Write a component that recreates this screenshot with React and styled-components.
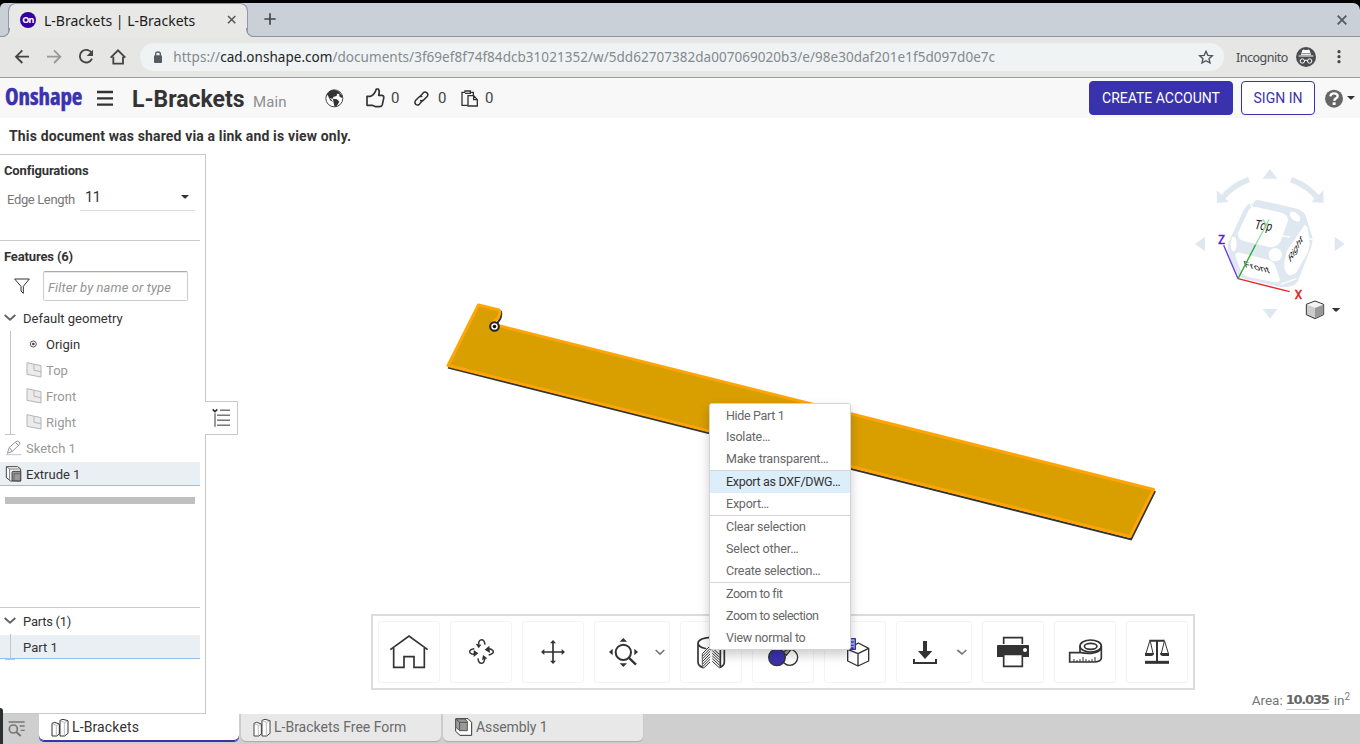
import React from "react";
import styled, { createGlobalStyle, css } from "styled-components";

const Global = createGlobalStyle`
  * { box-sizing: border-box; }
  html, body { margin: 0; padding: 0; }
  body { width: 1360px; height: 744px; overflow: hidden; background: #fff; }
  #root { height: 744px; }
`;

const ink = "#333";
const indigo = "#3a32ad";

const Window = styled.div`
  position: relative;
  display: flex;
  flex-direction: column;
  width: 1360px;
  height: 744px;
  overflow: hidden;
  background: #fff;
  color: ${ink};
  font-family: Roboto, "Liberation Sans", sans-serif;
  font-size: 13px;
  white-space: nowrap;
`;

const Svg = styled.svg`
  display: block;
  flex: none;
  overflow: visible;
`;

/* Icons are drawn on a grid of three units to the pixel. */
function Icon({ box, children, ...rest }) {
  const [, , w, h] = box.split(" ").map(Number);
  return (
    <Svg viewBox={box} width={w / 3} height={h / 3} fill="none" {...rest}>
      {children}
    </Svg>
  );
}

/* ---------- browser chrome ---------- */

const Backdrop = styled.div`
  flex: none;
  padding-top: 3px;
  background: #000;
  font-family: "Noto Sans", sans-serif;
`;

const TabStrip = styled.div`
  height: 34px;
  padding: 0 12px 0 8px;
  display: flex;
  align-items: flex-start;
  background: #c9d0d8;
  border-bottom: 1px solid #8f959e;
  border-radius: 5px 7px 0 0;
`;

const BrowserTab = styled.div`
  position: relative;
  width: 240px;
  height: 34px;
  padding: 0 11px 1px 11px;
  display: flex;
  align-items: center;
  background: #e8e8e6;
  border: 1px solid #9198a1;
  border-bottom: 0;
  border-radius: 8px 8px 0 0;
  font-size: 14px;
  color: #1c1c1c;
  &::before, &::after {
    content: "";
    position: absolute;
    bottom: 0;
    width: 8px;
    height: 8px;
    border-bottom: 1px solid #9198a1;
  }
  &::before { left: -8px; border-right: 1px solid #9198a1; border-bottom-right-radius: 8px; box-shadow: 3px 3px 0 1px #e8e8e6; clip-path: inset(0 -1px 0 0); }
  &::after { right: -8px; border-left: 1px solid #9198a1; border-bottom-left-radius: 8px; box-shadow: -3px 3px 0 1px #e8e8e6; clip-path: inset(0 0 0 -1px); }
`;

const Favicon = styled.span`
  width: 16px;
  height: 16px;
  margin-right: 8px;
  border-radius: 50%;
  background: #3500a0;
  color: #fff;
  font: bold 9px/16px "Noto Sans", sans-serif;
  letter-spacing: -0.7px;
  text-align: center;
`;

const Grow = styled.span`
  flex: 1;
`;

const NewTab = styled.div`
  margin: 10px 0 0 16px;
`;

const CloseWindow = styled.div`
  margin: 12px 1px 0 auto;
`;

const Toolbar = styled.div`
  flex: none;
  display: flex;
  align-items: center;
  height: 41px;
  padding: 0 19px 0 14px;
  background: #e6e6e4;
  border-bottom: 1px solid #9c9c9c;
  font-family: "Noto Sans", sans-serif;
`;

const Omnibox = styled.div`
  display: flex;
  align-items: center;
  width: 1084px;
  height: 28px;
  margin-left: 6px;
  padding: 0 11px 0 14px;
  border-radius: 14px;
  background: #eff3f4;
  font-size: 13.5px;
  letter-spacing: 0.04px;
  color: #85898e;
`;

const Url = styled.span`
  margin-left: 11px;
  b { font-weight: 400; color: #222528; }
`;

const Incognito = styled.span`
  margin: 0 8px 0 12px;
  font-size: 12.5px;
  letter-spacing: -0.5px;
  color: #4a4d50;
`;

/* ---------- document header ---------- */

const Header = styled.header`
  flex: none;
  display: flex;
  align-items: center;
  height: 40px;
  padding: 0 5px;
  background: #f8f8f8;
`;

const Logo = styled.span`
  width: 92px;
  margin-top: -4px;
  font: bold 23px/26px "Open Sans", sans-serif;
  font-stretch: condensed;
  letter-spacing: -0.1px;
  color: ${indigo};
  -webkit-text-stroke: 0.5px ${indigo};
`;

const DocName = styled.h1`
  width: 121px;
  margin: 3px 0 0 19px;
  font-size: 23px;
  line-height: 28px;
  font-weight: 700;
`;

const Workspace = styled.span`
  width: 72px;
  margin-top: 7px;
  font-size: 15px;
  letter-spacing: 0.1px;
  color: #8d8d8d;
`;

const Count = styled.span`
  width: ${(p) => p.$w}px;
  margin-left: ${(p) => p.$gap}px;
  font-size: 15px;
  color: #444;
`;

const ThumbWrap = styled.span`
  margin-left: 22px;
`;

const LinkWrap = styled.span`
  margin-left: 8px;
`;

const HelpCaret = styled.span`
  margin-left: 4px;
`;

const Button = styled.button`
  height: 34px;
  width: ${(p) => p.$w}px;
  margin: 0 ${(p) => p.$after}px 1px 0;
  padding: 0;
  border: 1px solid ${indigo};
  border-radius: 4px;
  font: 14px Roboto, sans-serif;
  ${(p) =>
    p.$primary
      ? css`background: ${indigo}; color: #fff;`
      : css`background: #fff; color: ${indigo};`}
`;

const Notice = styled.div`
  flex: none;
  height: 36px;
  padding-left: 9px;
  font-size: 14px;
  font-weight: 700;
  line-height: 36px;
  letter-spacing: 0.15px;
`;

/* ---------- work area ---------- */

const Work = styled.main`
  position: relative;
  flex: none;
  display: flex;
  height: 560px;
`;

const Sidebar = styled.aside`
  display: flex;
  flex-direction: column;
  width: 206px;
  height: 560px;
  padding-right: 5px;
  border: 1px solid #c9c9c9;
  border-left: 0;
`;

const Panel = styled.section`
  flex: none;
  height: ${(p) => p.$h}px;
  border-bottom: ${(p) => (p.$last ? 0 : "1px solid #cbcbcb")};
`;

const Heading = styled.h2`
  margin: 0 0 -1px;
  padding-left: 4px;
  font-size: 13px;
  line-height: 31px;
  letter-spacing: -0.15px;
  font-weight: 700;
`;

const ConfigRow = styled.label`
  display: flex;
  align-items: center;
  height: 25px;
  margin-right: 5px;
  padding: 4px 0 0 7px;
  color: #777;
  letter-spacing: -0.36px;
`;

const Select = styled.span`
  display: flex;
  align-items: center;
  justify-content: space-between;
  width: 115px;
  height: 26px;
  margin: -3px 0 0 auto;
  padding: 1px 6px 2px 5px;
  border-bottom: 1px solid #ddd;
  font-size: 14.5px;
  color: ${ink};
`;

const FilterRow = styled.div`
  display: flex;
  align-items: center;
  height: 30px;
  margin-bottom: 4px;
  padding-left: 14px;
`;

const FilterInput = styled.input`
  width: 145px;
  height: 30px;
  margin-left: 13px;
  padding: 2px 4px 0;
  border: 1px solid #ccc;
  border-top-color: #aaa;
  border-radius: 2px;
  box-shadow: inset 0 1px 1px rgba(0, 0, 0, 0.1);
  font: italic 13px Roboto, sans-serif;
  letter-spacing: 0.1px;
  &::placeholder { color: #949494; opacity: 1; }
`;

const Row = styled.div`
  display: flex;
  align-items: center;
  height: 26px;
  padding-left: ${(p) => p.$indent || 4}px;
  color: ${(p) => (p.$dim ? "#999" : ink)};
`;

const PartsHead = styled(Row)`
  letter-spacing: -0.25px;
`;

const RowIcon = styled.span`
  display: flex;
  width: ${(p) => p.$w}px;
`;

const Branch = styled.div`
  position: relative;
  &::before {
    content: "";
    position: absolute;
    z-index: 1;
    left: 10px;
    top: ${(p) => p.$top}px;
    bottom: ${(p) => p.$bottom}px;
    border-left: 1px solid #c4c4c4;
  }
  &::after {
    content: "";
    position: absolute;
    left: 5px;
    bottom: ${(p) => p.$bottom}px;
    width: 10px;
    border-top: 1px solid #c4c4c4;
  }
`;

const Selected = styled(Row)`
  height: 24px;
  margin-top: 1px;
  padding-top: 1px;
  background: #eaeff3;
  border-bottom: 1px solid #8dc2ea;
`;

const Rollback = styled.div`
  height: 7px;
  margin: 11px 5px 0;
  background: #bfbfbf;
`;

const Flyout = styled.div`
  position: absolute;
  left: 205px;
  top: 247px;
  width: 33px;
  height: 34px;
  padding: 6px 0 0 7px;
  background: #fff;
  border: 1px solid #c9c9c9;
  border-left: 0;
`;

const Viewport = styled.div`
  position: relative;
  width: 1154px;
  height: 560px;
`;

const Model = styled(Svg)`
  position: absolute;
  left: 234px;
  top: 140px;
`;

const Cube = styled.div`
  position: absolute;
  right: 0;
  top: 1px;
`;

const ToolTray = styled.div`
  position: absolute;
  left: 165px;
  top: 460px;
  display: flex;
  gap: 10px;
  padding: 5px;
  border: 2px solid #dcdcdc;
  background: #fff;
`;

const Tool = styled.div`
  border: 1px solid #f3f3f3;
  border-radius: 3px;
`;

const Readout = styled.div`
  position: absolute;
  right: 10px;
  top: 536px;
  display: flex;
  align-items: center;
  font-size: 13.5px;
  line-height: 21px;
  color: #777;
  b {
    margin: 0 5px 0 3px;
    font: bold 13px/18px "DejaVu Sans", sans-serif;
    letter-spacing: -1.2px;
    color: #666;
    border-bottom: 1px solid #ccc;
  }
  sup { font-size: 10px; line-height: 8px; margin-top: -8px; }
`;

const Menu = styled.div`
  position: absolute;
  left: 503px;
  top: 249px;
  width: 142px;
  border: 1px solid #d4d4d4;
  border-radius: 3px;
  background: #fff;
  box-shadow: 0 5px 11px rgba(0, 0, 0, 0.2);
  overflow: hidden;
`;

const MenuItem = styled.div`
  height: ${(p) => (p.$divided ? 23 : 22)}px;
  padding-left: 16px;
  line-height: 21px;
  font-size: 12.5px;
  letter-spacing: ${(p) => p.$track}px;
  border-top: ${(p) => (p.$divided ? "1px solid #d4d4d4" : 0)};
  background: ${(p) => (p.$active ? "#dceefa" : "#fff")};
  color: ${(p) => (p.$active ? ink : "#666")};
  &:first-child { line-height: 23px; }
`;

/* ---------- document tabs ---------- */

const Footer = styled.footer`
  display: flex;
  height: 30px;
  background: #cfcfcf;
`;

const DesktopCorner = styled.div`
  position: absolute;
  left: -3px;
  top: 708px;
  width: 6px;
  height: 40px;
  border-radius: 4px;
  background: #2b2f31;
`;

const TabSearch = styled.div`
  width: 39px;
  padding: 6px 0 0 8px;
`;

const DocTab = styled.div`
  display: flex;
  align-items: center;
  width: 200px;
  height: 27px;
  margin-right: 2px;
  padding: 0 0 1px 12px;
  border-radius: 0 0 5px 5px;
  font-size: 14px;
  letter-spacing: ${(p) => p.$track || 0}px;
  background: ${(p) => (p.$active ? "#fff" : "#e8e8e8")};
  color: ${(p) => (p.$active ? ink : "#6b6b6b")};
  box-shadow: ${(p) => (p.$active ? `inset 0 -1px 0 ${indigo}, 0 1px 0 ${indigo}` : "0 1px 1px #aaa")};
`;

const TabIcon = styled.span`
  margin-right: 3px;
`;

/* ---------- drawings ---------- */

const Caret = () => (
  <Icon box="0 0 24 12"><path d="M0 0H24L15 9Q12 12 9 9Z" fill={ink} /></Icon>
);

const Chevron = () => (
  <Icon box="12 494 38 24"><path d="M14 497L30 511L46 497" stroke="#666" strokeWidth="6" /></Icon>
);

const Plane = () => (
  <Icon box="78 68 48 48">
    <path d="M81 70L123 79V113L81 105Z" fill="#ebebeb" stroke="#b5b5b5" strokeWidth="3" />
    <path d="M102 75V93L123 97" stroke="#b5b5b5" strokeWidth="3" />
  </Icon>
);

const StudioIcon = ({ color = "#333" }) => (
  <Icon box="151 382 54 57" stroke={color} strokeWidth="3" strokeLinejoin="round">
    <path d="M154 398L162 395L176 400V430L168 436H154Z" fill="#fff" />
    <path d="M155 399L167 404V435M168 404L176 401" stroke="#999" strokeWidth="2" />
    <path d="M178 389L187 386L202 390V428L192 436H178Z" fill="#fff" />
    <path d="M179 390L191 395V435M192 395L201 391" stroke="#999" strokeWidth="2" />
  </Icon>
);

const tools = [
  ["57 66 180 180", <g key="a" stroke={ink} strokeWidth="5">
    <path d="M91 149L147 108L203 149" />
    <path d="M101 144V202H132V170H162V202H193V144" />
  </g>],
  ["273 66 180 180", <g key="b" stroke={ink} strokeWidth="4.500">
    <path d="M356 133C355 124 360 119 365 119C371 119 374 125 375 134" />
    <path d="M387 146C397 148 400 151 400 155C400 160 393 163 386 165" />
    <path d="M374 177C373 186 369 190 364 190C358 190 355 184 354 175" />
    <path d="M343 163C333 162 329 159 329 155C329 150 336 147 343 146" />
    <path d="M347 131L364 134L356 145ZM388 137L374 149L390 159ZM382 175L369 165L366 180ZM341 150L355 160L341 171Z" fill={ink} stroke="none" />
  </g>],
  ["489 66 180 180", <g key="c" fill={ink}>
    <path d="M547 156H611M579 124V188" stroke={ink} strokeWidth="5" />
    <path d="M543 156L553 147V165ZM615 156L605 147V165ZM579 120L570 130H588ZM579 192L570 182H588Z" />
  </g>],
  ["705 66 222 180", <g key="d" fill={ink}>
    <circle cx="790" cy="157" r="23" fill="none" stroke={ink} strokeWidth="6" />
    <path d="M806 173L828 194" stroke={ink} strokeWidth="7" />
    <path d="M790 114L801 125H779ZM790 201L801 190H779ZM747 156L758 146V166ZM834 156L823 146V166Z" />
    <path d="M887 150L900 162L913 150" fill="none" stroke="#777" strokeWidth="5" />
  </g>],
  ["-27 66 180 180", <g key="e" stroke={ink} strokeWidth="5">
    <path d="M24 133V186Q24 198 38 202V160M103 133V186Q103 198 89 202" />
    <ellipse cx="63.5" cy="130" rx="39.500" ry="18" />
    <path d="M38 202V155L60 135V194ZM67 140L89 160V202L67 194Z" fill="#fff" stroke="none" />
    <path d="M38 160L60 138M38 168L60 146M38 176L60 154M38 184L60 162M38 192L60 170M38 200L60 178M41 204L60 186M67 144L89 164M67 152L89 172M67 160L89 180M67 168L89 188M67 176L89 196M67 184L89 204" strokeWidth="3" />
    <path d="M91 150V202" />
  </g>],
  ["189 66 180 180", <g key="f" stroke={ink} strokeWidth="4">
    <path d="M268 146L289 166L305 146Z" fill="#aaa" />
    <circle cx="299" cy="172" r="24" />
    <circle cx="261" cy="172" r="25" fill={indigo} />
  </g>],
  ["405 66 180 180", <g key="g" stroke={ink} strokeWidth="4" strokeLinejoin="round">
    <path d="M473 148L505 129L536 145V183L504 198L473 183ZM473 148L504 161L536 145M504 161V198" />
    <path d="M474 116H496V148H474ZM482 126H491M482 136H491M480 144H491" stroke={indigo} fill="#9fb6e8" />
  </g>],
  ["621 66 222 180", <g key="h" fill={ink}>
    <path d="M699 123H711V153H727L705 177L684 153H699Z" />
    <path d="M672 177V189H738V177" fill="none" stroke={ink} strokeWidth="6" />
    <path d="M802 150L816 162L829 150" fill="none" stroke="#777" strokeWidth="5" />
  </g>],
  ["39 66 180 180", <g key="i">
    <path d="M101 132V113H157V132" stroke={ink} strokeWidth="5" />
    <path d="M81 138Q81 135 84 135H174Q177 135 177 138V171H81Z" fill={ink} />
    <path d="M101 163H157V199H101Z" fill="#fff" stroke={ink} strokeWidth="5" />
    <circle cx="165" cy="150" r="6" fill="#fff" />
  </g>],
  ["255 66 180 180", <g key="j" stroke={ink} strokeWidth="5">
    <path d="M330 158H299V186H370Q394 186 394 174V138M330 138V157Q345 161 363 160Q394 157 394 138" />
    <ellipse cx="362" cy="138" rx="32" ry="18" />
    <ellipse cx="362" cy="139" rx="19" ry="9" />
    <path d="M312 186V177M321 186V180M330 186V177M339 186V171M348 186V177M357 186V180M366 186V177M375 185V171" strokeWidth="3" />
  </g>],
  ["471 66 180 180", <g key="k" stroke={ink}>
    <path d="M538 122H584M561 122V184" strokeWidth="6" />
    <path d="M525 187H597" strokeWidth="9" />
    <path d="M539 124L528 160M541 124L549 160M583 124L574 160M584 124L595 160" strokeWidth="3" />
    <path d="M525 159H552Q552 168 543 168H525ZM570 159H597V168H579Q570 168 570 159Z" fill={ink} stroke="none" />
  </g>],
];

const menu = [
  ["Hide Part 1", -0.33],
  ["Isolate…", -0.22],
  ["Make transparent…", -0.2],
  ["Export as DXF/DWG…", -0.3, "active"],
  ["Export…", -0.22],
  ["Clear selection", -0.17, "divided"],
  ["Select other…", -0.12],
  ["Create selection…", -0.23],
  ["Zoom to fit", -0.44, "divided"],
  ["Zoom to selection", -0.46],
  ["View normal to", -0.28],
];

function ViewCube() {
  return (
    <Icon box="0 0 540 540">
      <g fill="#dfe7f0">
        <path d="M270 42L292 71H248ZM270 491L292 462H248ZM45 267L75 245V289ZM494 267L464 245V289Z" />
        <path d="M110 106L147 141L111 144ZM430 106L394 141L431 144Z" />
        <path d="M124 133Q157 91 207 74M416 133Q383 91 333 74" fill="none" stroke="#dfe7f0" strokeWidth="17" />
        <path d="M220 150Q220 134 236 135L345 160Q366 165 376 179L398 250Q396 278 386 295L354 378Q344 397 305 397L196 372Q168 362 160 339L142 281Q143 265 151 250L191 166Q203 144 215 143Z" />
      </g>
      <g fill="#fff">
        <path d="M203 172Q210 154 229 156L304 173Q325 179 324 197L301 260Q290 279 266 276L191 258Q171 252 174 234Z" />
        <path d="M166 303Q166 291 180 293L266 315Q282 319 286 333L299 371Q301 383 285 382L205 366Q190 362 183 349Z" />
        <path d="M373 211Q382 211 384 224L389 266Q388 282 382 295L350 351Q337 366 323 358Q311 348 313 321L321 287Z" />
        <circle cx="286" cy="299" r="20" />
        <ellipse cx="161" cy="267" rx="9" ry="22" />
        <ellipse cx="345" cy="185" rx="19" ry="11" transform="rotate(43 345 185)" />
      </g>
      <path d="M211 144L218 162M302 242L330 246M386 251L399 254M302 388L349 371" stroke="#fff" strokeWidth="4" />
      <g fill="#222" fontFamily="Roboto, sans-serif">
        <text transform="matrix(1 .14 -.3 1 221 221)" fontSize="38" textLength="52" lengthAdjust="spacingAndGlyphs">Top</text>
        <text transform="matrix(1 .25 .3 .8 195 336)" fontSize="33" textLength="77">Front</text>
        <text transform="matrix(.5 -.87 .22 .8 330 324)" fontSize="35" textLength="78">Right</text>
      </g>
      <path d="M174 371L131 271" stroke="#6a35e8" strokeWidth="4" />
      <path d="M174 371L329 410" stroke="#e32b2b" strokeWidth="4" />
      <path d="M174 371L227 269" stroke="#2aaa3a" strokeWidth="4" />
      <path d="M227 269L259 210M249 193L259 210L267 193" stroke="#97dfa2" strokeWidth="4" />
      <g fontFamily="Roboto, sans-serif" fontSize="39" strokeWidth="1.500">
        <text x="115" y="268" fill="#5a20e0" stroke="#5a20e0" textLength="20" lengthAdjust="spacingAndGlyphs">Z</text>
        <text x="344" y="431" fill="#e01a1a" stroke="#e01a1a" textLength="22" lengthAdjust="spacingAndGlyphs">X</text>
      </g>
      <path d="M379 448L405 438L431 448V479L405 491L379 479Z" fill="#ccc" stroke="#333" strokeWidth="3" />
      <path d="M405 459L430 449V478L405 490Z" fill="#999" />
      <path d="M381 449L405 440L429 449L405 458Z" fill="#f4f4f4" />
      <path d="M456 459H481L471 469Q468 471 465 469Z" fill={ink} />
    </Icon>
  );
}

function ChromeTop() {
  return (
    <Backdrop>
      <TabStrip>
        <BrowserTab>
          <Favicon>On</Favicon>
          L-Brackets | L-Brackets
          <Grow />
          <Icon box="682 46 28 28"><path d="M685 49L707 71M707 49L685 71" stroke="#555" strokeWidth="4.500" /></Icon>
        </BrowserTab>
        <NewTab><Icon box="792 42 36 36"><path d="M810 43V77M793 60H827" stroke="#444" strokeWidth="5" /></Icon></NewTab>
        <CloseWindow><Icon box="891 45 30 30"><path d="M893 47L919 73M919 47L893 73" stroke="#555b63" strokeWidth="5.500" /></Icon></CloseWindow>
      </TabStrip>
    </Backdrop>
  );
}

function ChromeBar() {
  return (
    <Toolbar>
      <Icon box="42 109 360 120">
        <path d="M87 168H49M67 149L48 168L67 187" stroke="#444" strokeWidth="5.500" />
        <path d="M141 168H180M162 149L181 168L162 187" stroke="#999" strokeWidth="5.500" />
        <path d="M275 157A19 19 0 1 0 276 174" stroke="#444" strokeWidth="5.500" />
        <path d="M279 147V166H260Z" fill="#444" />
        <path d="M340 168V189H369V168M332 171L354 149L376 171" stroke="#444" strokeWidth="5.500" />
      </Icon>
      <Omnibox>
        <Icon box="462 151 25 38">
          <path d="M465 164H483Q486 164 486 167V184Q486 187 483 187H465Q462 187 462 184V167Q462 164 465 164Z" fill="#555b63" />
          <path d="M467 165V160Q467 154 474 154Q481 154 481 160V165" stroke="#555b63" strokeWidth="4" />
        </Icon>
        <Url>https://<b>cad.onshape.com</b>/documents/3f69ef8f74f84dcb31021352/w/5dd62707382da007069020b3/e/98e30daf201e1f5d097d0e7c</Url>
        <Grow />
        <Icon box="477 150 42 42">
          <path d="M498 154L503.500 166L517 167.500L507 176L510 189L498 182L486 189L489 176L479 167.500L492.500 166Z" stroke="#4d5157" strokeWidth="4" />
        </Icon>
      </Omnibox>
      <Incognito>Incognito</Incognito>
      <Icon box="768 141 60 60">
        <circle cx="798" cy="171" r="30" fill="#4b4d4f" />
        <path d="M776 168H820M784 164L789 150Q798 154 807 150L812 164Z" fill="#fff" stroke="#fff" strokeWidth="3" />
        <path d="M784 161H812" stroke="#4b4d4f" strokeWidth="2" />
        <circle cx="787" cy="183" r="6.500" stroke="#fff" strokeWidth="3" />
        <circle cx="809" cy="183" r="6.500" stroke="#fff" strokeWidth="3" />
        <path d="M793 182Q798 179 803 182" stroke="#fff" strokeWidth="3" />
      </Icon>
      <Grow />
      <Icon box="890 152 12 42">
        <g fill="#444"><circle cx="896" cy="157" r="4.800" /><circle cx="896" cy="172" r="4.800" /><circle cx="896" cy="187" r="4.800" /></g>
      </Icon>
    </Toolbar>
  );
}

function DocHeader() {
  return (
    <Header>
      <Logo>Onshape</Logo>
      <Icon box="291 268 48 54"><path d="M291 277H339M291 296H339M291 315H339" stroke="#333" strokeWidth="7" /></Icon>
      <DocName>L-Brackets</DocName>
      <Workspace>Main</Workspace>
      <Icon box="14 266 57 57">
        <circle cx="42" cy="294" r="25.500" fill="#fff" stroke="#444" strokeWidth="3" />
        <path d="M20 283Q27 268 43 269L57 274L60 281L50 280L49 287L40 289L36 296L28 292L23 287L31 301L39 304L32 297ZM38 295L50 297L57 304L50 316L43 320L40 309Z" fill="#333" />
        <path d="M57 277L66 286L64 293L57 288Z" fill="#333" />
      </Icon>
      <ThumbWrap>
        <Icon box="137 264 57 60" stroke="#333" strokeWidth="5" strokeLinejoin="round">
          <path d="M140 289H151Q163 284 168 267H174Q179 274 175 286H185Q192 287 190 295L186 314Q184 320 178 320H166L156 316H140Z" />
        </Icon>
      </ThumbWrap>
      <Count $w={15} $gap={6}>0</Count>
      <LinkWrap>
        <Icon box="284 272 45 45" stroke="#333" strokeWidth="4.500">
          <path d="M301 290L312 277Q317 273 322 277Q328 282 324 288L312 300Q307 303 302 300" />
          <path d="M311 299L300 312Q295 316 289 312Q285 307 288 301L299 290Q304 286 309 289" />
        </Icon>
      </LinkWrap>
      <Count $w={23} $gap={9}>0</Count>
      <Icon box="422 268 54 51" stroke="#333" strokeWidth="4">
        <path d="M434 275H425V314H442M434 275V271H450V278H434M450 275H459V284" />
        <path d="M443 285H460L471 297V316H443ZM460 285V297H471" />
      </Icon>
      <Count $w={20} $gap={6}>0</Count>
      <Grow />
      <Button $primary $w={144} $after={8}>CREATE ACCOUNT</Button>
      <Button $w={74} $after={10}>SIGN IN</Button>
      <Icon box="855 268 54 54">
        <circle cx="882" cy="297" r="27" fill="#666" />
        <path d="M871 290Q872 281 882 281Q893 281 893 289Q893 294 887 297Q883 299 883 304" stroke="#fff" strokeWidth="7" />
        <path d="M878 308H887V316H878Z" fill="#fff" />
      </Icon>
      <HelpCaret><Caret /></HelpCaret>
    </Header>
  );
}

function FeaturePanel() {
  return (
    <Sidebar>
      <Panel $h={86}>
        <Heading>Configurations</Heading>
        <ConfigRow>Edge Length<Select>11<Caret /></Select></ConfigRow>
      </Panel>
      <Panel $h={367}>
        <Heading>Features (6)</Heading>
        <FilterRow>
          <Icon box="44 385 48 48"><path d="M46 388H90L72 410V431L65 424V410Z" stroke="#333" strokeWidth="3" /></Icon>
          <FilterInput placeholder="Filter by name or type" />
        </FilterRow>
        <Row><RowIcon $w={19}><Chevron /></RowIcon>Default geometry</Row>
        <Branch $top={0} $bottom={0}>
          <Row $indent={29}>
            <RowIcon $w={17}>
              <Icon box="87 2 24 24"><circle cx="100" cy="14" r="9" stroke="#555" strokeWidth="3" /><circle cx="100" cy="14" r="4" fill="#444" /></Icon>
            </RowIcon>
            Origin
          </Row>
          <Row $dim $indent={26}><RowIcon $w={20}><Plane /></RowIcon>Top</Row>
          <Row $dim $indent={26}><RowIcon $w={20}><Plane /></RowIcon>Front</Row>
          <Row $dim $indent={26}><RowIcon $w={20}><Plane /></RowIcon>Right</Row>
        </Branch>
        <Row $dim $indent={6}>
          <RowIcon $w={20}>
            <Icon box="18 303 48 48">
              <path d="M22 343L28 325L48 308Q54 304 58 309Q61 313 57 318L37 337ZM28 325L37 337M46 310L56 320" stroke="#999" strokeWidth="3" />
              <path d="M18 347H64" stroke="#c4c1e8" strokeWidth="3" />
            </Icon>
          </RowIcon>
          Sketch 1
        </Row>
        <Selected $indent={6}>
          <RowIcon $w={20}>
            <Icon box="18 380 48 48" stroke="#444" strokeWidth="3">
              <path d="M19 382L53 382L62 389V425H32L19 415Z" fill="#fff" />
              <path d="M19 382L29 389H62M29 389V424" stroke="#777" />
              <path d="M36 424V399Q36 396 39 396H62V425Z" fill="#999" />
              <path d="M42 403H62M42 403V424" stroke="#666" />
            </Icon>
          </RowIcon>
          Extrude 1
        </Selected>
        <Rollback />
      </Panel>
      <Panel $last $h={60}>
        <PartsHead><RowIcon $w={19}><Chevron /></RowIcon>Parts (1)</PartsHead>
        <Branch $top={-1} $bottom={-1}>
          <Selected $indent={23}>Part 1</Selected>
        </Branch>
      </Panel>
    </Sidebar>
  );
}

export default function App() {
  return (
    <Window>
      <Global />
      <ChromeTop />
      <ChromeBar />
      <DocHeader />
      <Notice>This document was shared via a link and is view only.</Notice>
      <Work>
        <FeaturePanel />
        <Viewport>
          <Model viewBox="0 0 730 260" width="730" height="260" fill="none">
            <path d="M8 73.500L691 245.300L715 197M60.500 17Q62 20 60 25L56 31" stroke="#333" strokeWidth="2.200" />
            <path d="M38.500 11L59 16Q61 18 58 24L53.500 28Q54 31 58 31.500L713.500 195.500L690 242.500L8 71.500Z" fill="#d99e00" stroke="#ffa505" strokeWidth="3" strokeLinejoin="round" />
            <circle cx="54.500" cy="32.500" r="4.300" fill="#fff" stroke="#222" strokeWidth="2" />
            <circle cx="54.500" cy="32.500" r="1.800" fill="#111" />
          </Model>
          <Cube><ViewCube /></Cube>
          <ToolTray>
            {tools.map(([box, art]) => (
              <Tool key={box}><Icon box={box}>{art}</Icon></Tool>
            ))}
          </ToolTray>
          <Readout>Area: <b>10.035</b> in<sup>2</sup></Readout>
          <Menu>
            {menu.map(([label, track, kind]) => (
              <MenuItem key={label} $track={track} $active={kind === "active"} $divided={Boolean(kind)}>
                {label}
              </MenuItem>
            ))}
          </Menu>
        </Viewport>
        <Flyout>
          <Icon box="636 205 57 57">
            <path d="M638 209L645 216L652 209" stroke="#333" strokeWidth="5" />
            <path d="M645 221V261" stroke="#999" strokeWidth="6" />
            <path d="M660 211.500H690M651 226.500H690M651 241.500H690M651 256.500H690" stroke="#333" strokeWidth="3" />
          </Icon>
        </Flyout>
      </Work>
      <Footer>
        <TabSearch>
          <Icon box="25 389 51 48" stroke="#777">
            <path d="M27 395H75M60 407H75M63 420H75" strokeWidth="4" />
            <circle cx="41" cy="416" r="12" strokeWidth="5" />
            <path d="M50 425L63 437" strokeWidth="6" />
          </Icon>
        </TabSearch>
        <DocTab $active $track={0.13}><TabIcon><StudioIcon /></TabIcon>L-Brackets</DocTab>
        <DocTab><TabIcon><StudioIcon color="#444" /></TabIcon>L-Brackets Free Form</DocTab>
        <DocTab $track={-0.1}>
          <TabIcon>
            <Icon box="283 353 54 54" stroke="#333" strokeWidth="3">
              <path d="M285 356L289 355H322L333 366V405H298L285 393Z" fill="#fff" />
              <path d="M285 356H313L320 364V391H297L285 380Z" fill="#999" stroke="#555" />
              <path d="M285 356L297 366H320M297 366V391" stroke="#555" />
            </Icon>
          </TabIcon>
          Assembly 1
        </DocTab>
      </Footer>
      <DesktopCorner />
    </Window>
  );
}
